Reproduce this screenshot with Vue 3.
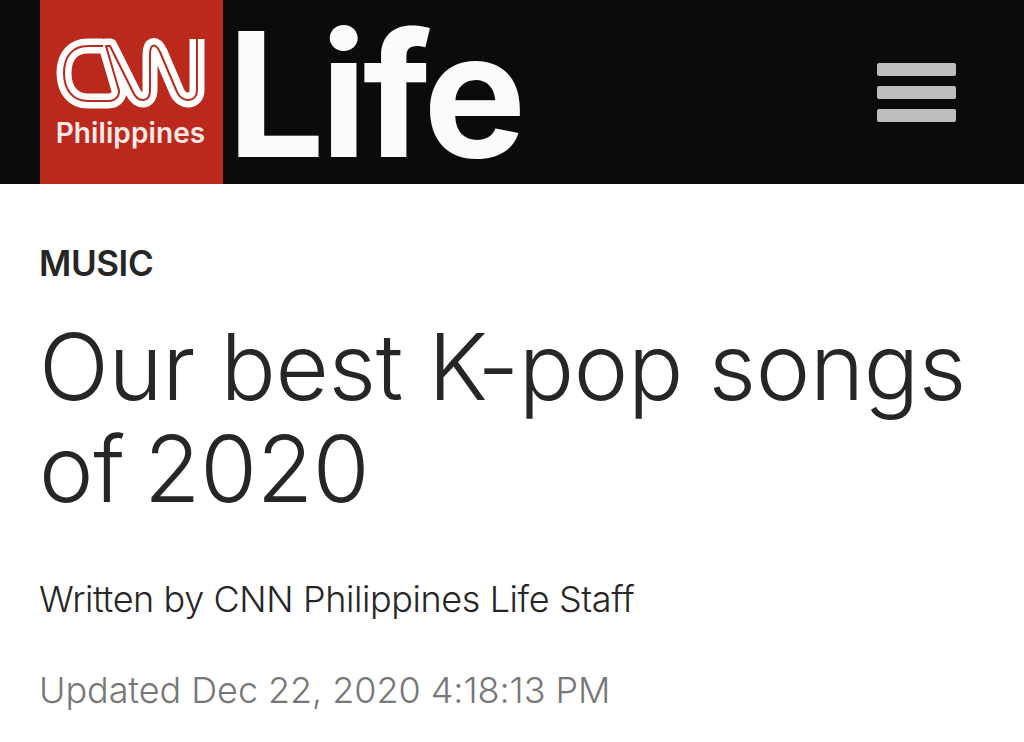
<template>
  <div class="page">
    <header class="topbar">
      <div class="brand">
        <svg class="cnn" viewBox="50 32 160 84" width="160" height="84" aria-label="CNN">
          <g fill="none" stroke-linejoin="round" stroke-linecap="butt">
            <path class="outer" :d="logoPath" />
            <path class="inner" :d="logoPath" />
          </g>
        </svg>
        <span class="country">Philippines</span>
      </div>
      <span class="life">Life</span>
      <button class="menu" aria-label="Menu">
        <span></span><span></span><span></span>
      </button>
    </header>
    <main class="article">
      <div class="section">MUSIC</div>
      <h1>Our best K-pop songs <span class="year">of 2020</span></h1>
      <p class="byline">Written by CNN Philippines Life Staff</p>
      <p class="updated">Updated Dec 22, 2020 4:18:13 PM</p>
    </main>
  </div>
</template>

<script setup>
const logoPath = 'M103 46 H88 C73 46 64 56 64 73 C64 90 73 101 88 101 H108 C117 101 121 94 118 87 L106 46 H110 L133 92 C138 103 150 103 150 90 V55 C150 44 155 42 160 52 L177 92 C182 103 197 103 197 90 V39'
</script>

<style>
html, body {
  background: #fff;
}
</style>

<style scoped>
.page {
  width: 1024px;
  height: 742px;
  overflow: hidden;
  font-family: Inter, sans-serif;
}
.topbar {
  height: 184px;
  background: #0b0b0b;
  display: flex;
  align-items: flex-start;
  padding-left: 40px;
  padding-right: 68px;
}
.brand {
  width: 183px;
  height: 184px;
  background: #bb281c;
  display: flex;
  flex-direction: column;
  align-items: center;
  padding-top: 32px;
  box-sizing: border-box;
}
.cnn {
  margin-left: -3px;
}
.outer {
  stroke: #fff;
  stroke-width: 15;
}
.inner {
  stroke: #bb281c;
  stroke-width: 2;
}
.country {
  color: #fbe9e6;
  font-weight: 600;
  font-size: 28px;
  line-height: 30px;
  margin: 2px 0 0 -2px;
  letter-spacing: 0.1px;
}
.life {
  color: #fbfbfb;
  font-weight: 700;
  font-size: 173px;
  line-height: 184px;
  margin-left: 4px;
  margin-top: 2px;
  letter-spacing: -4.5px;
}
.menu {
  margin-left: auto;
  margin-top: 63px;
  width: 79px;
  display: flex;
  flex-direction: column;
  gap: 10px;
  padding: 0;
  background: none;
  border: 0;
}
.menu span {
  height: 13px;
  background: #bdbdbd;
  border-radius: 2px;
}
.article {
  padding: 0 39px;
  color: #262626;
}
.section {
  font-size: 35px;
  line-height: 42px;
  margin-top: 58px;
  font-weight: 600;
  letter-spacing: -0.4px;
}
h1 {
  font-weight: 300;
  font-size: 92px;
  line-height: 102px;
  margin: 32px 0 0;
  letter-spacing: -0.35px;
}
.year {
  white-space: nowrap;
  word-spacing: -6px;
}
.byline {
  font-weight: 300;
  font-size: 36px;
  line-height: 42px;
  margin: 58px 0 0;
  letter-spacing: -0.4px;
}
.updated {
  font-weight: 300;
  font-size: 36px;
  line-height: 42px;
  color: #777;
  margin: 49px 0 0;
  letter-spacing: -0.06px;
}
</style>
